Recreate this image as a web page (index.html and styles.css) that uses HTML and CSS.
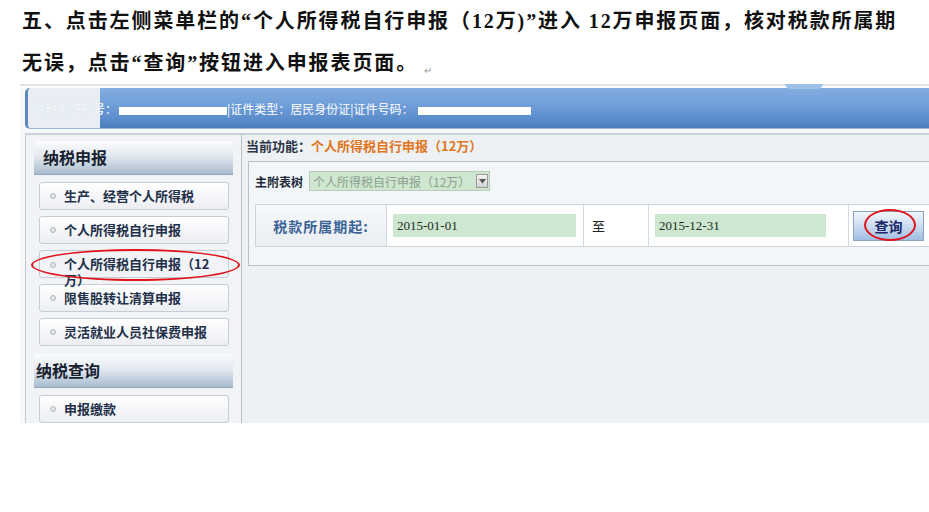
FILE: index.html
```html
<!DOCTYPE html>
<html lang="zh-CN">
<head>
<meta charset="utf-8">
<link rel="stylesheet" href="styles.css">
</head>
<body>
<div class="doc">
  <p class="line">五、点击左侧菜单栏的“个人所得税自行申报（12万)”进入 12万申报页面，核对税款所属期</p>
  <p class="line">无误，点击“查询”按钮进入申报表页面。<span class="ret">↵</span></p>
</div>
<div class="shot">
  <div class="topline"><span class="arc"></span></div>
  <div class="header">
    <span class="hdr-text"><span class="faint">纳税人识别号</span>：<span class="redact r1"></span>|证件类型：居民身份证|证件号码：<span class="redact r2"></span></span>
  </div>
  <div class="content">
    <div class="sidebar">
      <div class="side-head">纳税申报</div>
      <div class="item"><span class="dot"></span>生产、经营个人所得税</div>
      <div class="item"><span class="dot"></span>个人所得税自行申报</div>
      <div class="item wrap"><span class="dot"></span><span class="wraptext">个人所得税自行申报（12万）</span></div>
      <div class="item"><span class="dot"></span>限售股转让清算申报</div>
      <div class="item"><span class="dot"></span>灵活就业人员社保费申报</div>
      <div class="side-head second">纳税查询</div>
      <div class="item"><span class="dot"></span>申报缴款</div>
      <span class="ellipse e-left"></span>
    </div>
    <div class="main">
      <div class="crumb">当前功能：<span class="cur">个人所得税自行申报（12万）</span></div>
      <div class="panel">
        <div class="tree-row">
          <span class="tree-label">主附表树</span>
          <span class="select">个人所得税自行申报（12万）<span class="sel-btn"><svg width="7" height="5" viewBox="0 0 7 5"><path d="M0 0h7L3.5 4.5z" fill="#555"/></svg></span></span>
        </div>
        <div class="query-row">
          <div class="cell label-cell">税款所属期起:</div>
          <div class="cell in-cell"><span class="input">2015-01-01</span></div>
          <div class="cell to-cell">至</div>
          <div class="cell in-cell2"><span class="input">2015-12-31</span></div>
          <div class="cell btn-cell"><span class="btn">查询</span><span class="ellipse e-right"></span></div>
        </div>
      </div>
    </div>
  </div>
</div>
</body>
</html>
```
FILE: styles.css
```css
html, body {
  margin: 0;
  padding: 0;
  background: #ffffff;
}
body {
  width: 929px;
  height: 512px;
  overflow: hidden;
  font-family: "Noto Sans CJK SC", sans-serif;
}
.doc {
  padding-left: 22px;
  height: 84px;
}
.line {
  margin: 0;
  font-family: "Liberation Serif", "Noto Sans CJK SC", serif;
  font-weight: 700;
  font-size: 20px;
  line-height: 42px;
  letter-spacing: 1.9px;
  color: #111;
  white-space: nowrap;
}
.ret {
  font-size: 10px;
  font-weight: 400;
  color: #999;
  vertical-align: -4px;
  margin-left: 6px;
}
.shot {
  margin-left: 20px;
  width: 909px;
  height: 339px;
  overflow: hidden;
  background: #f6f7f9;
  display: flex;
  flex-direction: column;
}
.topline {
  height: 4px;
  border-top: 2px solid #dfe2e7;
  position: relative;
  background: #fbfcfd;
}
.arc {
  position: absolute;
  left: 765px;
  top: -3px;
  width: 38px;
  height: 6px;
  border-radius: 0 0 20px 20px;
  background: #9cc1e6;
}
.header {
  margin-left: 5px;
  height: 40px;
  display: flex;
  background:
    linear-gradient(to right, #e9eef4 0, #e9eef4 72px, transparent 72px),
    linear-gradient(to bottom, #84ade0 0%, #6e9dd8 45%, #5688c8 85%, #4d7db9 100%);
  border-left: 3px solid #5d87bd;
  border-radius: 5px 0 0 5px;
  font-size: 12px;
  color: #ffffff;
  line-height: 42px;
  border-bottom: 1px solid #9bb3cc;
}
.hdr-text {
  padding-left: 5px;
  white-space: nowrap;
}
.faint {
  color: #f9fbfd;
  text-shadow: 0 0 1px #c3d0de;
}
.redact {
  display: inline-block;
  height: 8px;
  background: #ffffff;
  vertical-align: middle;
}
.r1 { width: 108px; margin-left: 2px; }
.r2 { width: 113px; margin-left: 4px; }
.content {
  margin-top: 4px;
  margin-left: 5px;
  flex: 1;
  display: flex;
  background: #eef1f4;
  border-top: 2px solid #c9d1da;
}
.sidebar {
  position: relative;
  flex: none;
  width: 199px;
  padding: 6px 8px 0 8px;
  border-left: 1px solid #c3cad3;
  border-right: 1px solid #b8c1cb;
  background: #f1f3f6;
  display: flex;
  flex-direction: column;
  gap: 6px;
}
.side-head {
  height: 33px;
  line-height: 33px;
  padding-left: 9px;
  font-size: 16px;
  font-weight: 700;
  color: #18222f;
  background: linear-gradient(to bottom, #fbfcfd 0%, #e3e9f0 45%, #a9bccf 100%);
  border-bottom: 1px solid #91a7be;
  margin-bottom: 1px;
}
.side-head.second {
  margin-top: 2px;
  padding-left: 2px;
}
.item {
  margin: 0 4px 0 5px;
  height: 26px;
  line-height: 26px;
  border: 1px solid #c6ccd4;
  border-radius: 3px;
  background: linear-gradient(to bottom, #ffffff, #eceef2);
  font-size: 13px;
  font-weight: 700;
  color: #1f3048;
  display: flex;
  align-items: center;
  white-space: nowrap;
}
.dot {
  width: 4px;
  height: 4px;
  border: 1px solid #b0b6bf;
  border-radius: 50%;
  background: #e4e7eb;
  margin: 0 8px 0 10px;
  flex: none;
}
.item.wrap {
  align-items: flex-start;
  position: relative;
  z-index: 1;
  background: transparent;
}
.wraptext {
  white-space: normal;
  width: 152px;
  line-height: 16px;
  padding-top: 5px;
}
.item.wrap .dot { margin-top: 11px; }
.ellipse {
  position: absolute;
  border: 2.5px solid #e0141a;
  border-radius: 50%;
  z-index: 2;
}
.e-left {
  left: 5px;
  top: 114px;
  width: 205px;
  height: 28px;
}
.main {
  flex: 1;
  min-width: 0;
  padding-left: 4px;
  display: flex;
  flex-direction: column;
}
.crumb {
  height: 22px;
  line-height: 22px;
  font-size: 13px;
  font-weight: 700;
  color: #2a3445;
}
.cur {
  color: #e0761e;
}
.panel {
  margin-left: 2px;
  margin-top: 4px;
  height: 95px;
  border: 1px solid #b8c2cd;
  border-right: none;
  background: #f3f6f9;
  padding: 8px 0 0 6px;
}
.tree-row {
  height: 22px;
  display: flex;
  align-items: center;
  font-size: 12px;
}
.tree-label {
  font-weight: 700;
  color: #1e2a3a;
  margin-right: 6px;
}
.select {
  display: flex;
  align-items: center;
  height: 20px;
  width: 181px;
  background: #cfe6d0;
  border: 1px solid #b7cdb9;
  color: #8ca08f;
  font-size: 12px;
  padding-left: 3px;
  box-sizing: border-box;
  position: relative;
}
.sel-btn {
  position: absolute;
  right: 1px;
  top: 2px;
  width: 12px;
  height: 14px;
  background: linear-gradient(#f4f4f4, #d2d2d2);
  border: 1px solid #9a9a9a;
  display: flex;
  align-items: center;
  justify-content: center;
  box-sizing: border-box;
}
.query-row {
  margin-top: 12px;
  height: 41px;
  display: flex;
  border-top: 1px solid #cdd4dc;
  border-bottom: 1px solid #cdd4dc;
  background: #ffffff;
}
.cell {
  display: flex;
  align-items: center;
  border-left: 1px solid #d5dbe2;
  box-sizing: border-box;
  flex: none;
}
.label-cell {
  width: 131px;
  justify-content: center;
  background: linear-gradient(#f7f9fb, #e9eef3);
  font-weight: 700;
  font-size: 14px;
  color: #3d6496;
  letter-spacing: 1px;
  border-left: 1px solid #cdd4dc;
}
.in-cell {
  width: 197px;
  padding-left: 6px;
}
.to-cell {
  width: 65px;
  padding-left: 8px;
  font-size: 13px;
  color: #222;
}
.in-cell2 {
  width: 200px;
  padding-left: 6px;
}
.input {
  display: block;
  height: 23px;
  line-height: 23px;
  width: 183px;
  background: #cde7d0;
  font-family: "Liberation Serif", serif;
  font-size: 13px;
  color: #1d2a1d;
  padding-left: 4px;
  box-sizing: border-box;
}
.in-cell2 .input { width: 171px; }
.btn-cell {
  width: 90px;
  padding-left: 4px;
  position: relative;
}
.btn {
  display: flex;
  align-items: center;
  justify-content: center;
  width: 71px;
  height: 30px;
  box-sizing: border-box;
  border: 1px solid #8ba2c0;
  background: linear-gradient(#f1f6fc 0%, #cbdcf0 50%, #9fbde2 100%);
  font-weight: 700;
  font-size: 14px;
  color: #1a2768;
}
.e-right {
  left: 15px;
  top: 4px;
  width: 48px;
  height: 28px;
}
```
